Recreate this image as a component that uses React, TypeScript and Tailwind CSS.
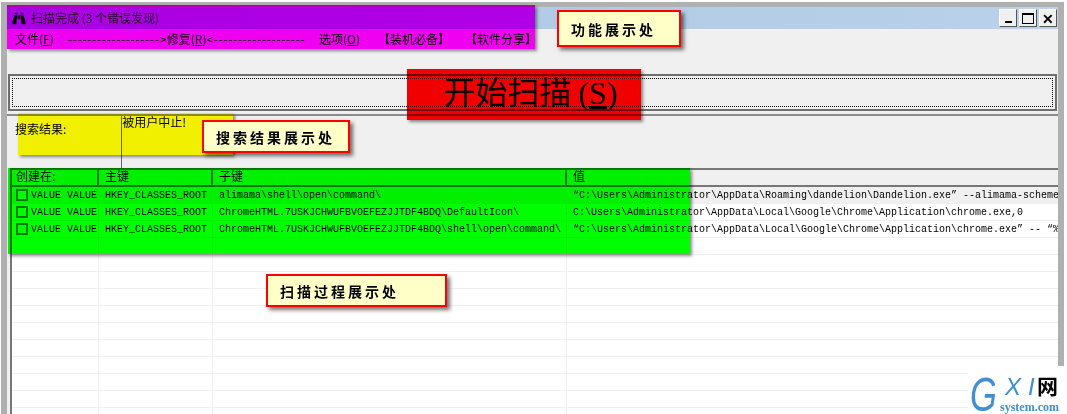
import React from "react";
import { FaBinoculars } from "react-icons/fa";

const cjk = "font-['Noto_Sans_CJK_SC','Liberation_Sans',sans-serif]";
const mono = "font-['Liberation_Mono','Noto_Sans_CJK_SC',monospace]";

const rows = [
  ["HKEY_CLASSES_ROOT", "alimama\\shell\\open\\command\\", "“C:\\Users\\Administrator\\AppData\\Roaming\\dandelion\\Dandelion.exe” --alimama-scheme"],
  ["HKEY_CLASSES_ROOT", "ChromeHTML.7USKJCHWUFBVOEFEZJJTDF4BDQ\\DefaultIcon\\", "C:\\Users\\Administrator\\AppData\\Local\\Google\\Chrome\\Application\\chrome.exe,0"],
  ["HKEY_CLASSES_ROOT", "ChromeHTML.7USKJCHWUFBVOEFEZJJTDF4BDQ\\shell\\open\\command\\", "“C:\\Users\\Administrator\\AppData\\Local\\Google\\Chrome\\Application\\chrome.exe” -- “%"],
];

function Note({ cls, children }: { cls: string; children: React.ReactNode }) {
  return (
    <div className={`absolute flex items-center border-[2px] border-[#ff0000] bg-[#ffffc8] pl-[12px] text-[14px] font-bold tracking-[3px] text-black shadow-[3px_3px_4px_rgba(0,0,0,0.55)] ${cls}`}>
      {children}
    </div>
  );
}

function WinBtn({ children }: { children: React.ReactNode }) {
  return (
    <div className="flex h-[18px] w-[18px] items-center justify-center border border-t-white border-l-white border-r-[#555] border-b-[#555] bg-[#f0f0f0]">
      {children}
    </div>
  );
}

export default function App() {
  return (
    <div className={`relative h-[414px] w-[1067px] overflow-hidden bg-white pt-[2px] text-[12px] leading-none text-black ${cjk}`}>
      <div className="ml-[1px] mr-[3px] flex h-[412px] flex-col border-x-[6px] border-t-[5px] border-[#b0b0b0] bg-[#f0f0f0]">
        {/* title bar */}
        <div className="flex h-[22px] shrink-0 items-center bg-gradient-to-r from-[#a9c6e2] to-[#b9d1ea] pl-[5px] pr-[1px]">
          <FaBinoculars className="h-[13px] w-[14px]" />
          <span className="ml-[5px] text-[12px] text-[#222]">扫描完成 (3 个错误发现)</span>
          <div className="ml-auto flex gap-[2px]">
            <WinBtn><div className="mt-[8px] h-[2px] w-[7px] bg-black" /></WinBtn>
            <WinBtn><div className="h-[11px] w-[12px] border border-t-[2px] border-black" /></WinBtn>
            <WinBtn><span className="text-[14px] font-bold leading-none">✕</span></WinBtn>
          </div>
        </div>
        {/* menu */}
        <div className="flex h-[20px] shrink-0 items-center whitespace-pre pl-[8px] text-[12px]">
          <span className="w-[53px] shrink-0">文件(<u>F</u>)</span>
          <span className="w-[251px] shrink-0">
            <span className="tracking-[0.65px]">{"------------------->"}</span>修复(<u>R</u>)<span className="tracking-[0.65px]">{"<-------------------"}</span>
          </span>
          <span className="w-[59px] shrink-0">选项(<u>O</u>)</span>
          <span className="w-[87px] shrink-0">【装机必备】</span>
          <span className="shrink-0">【软件分享】</span>
        </div>
        {/* scan button */}
        <div className="mt-[25px] mr-[1px] ml-[1px] h-[37px] shrink-0 border-2 border-[#6e6e6e] p-[2px]">
          <div className="flex h-full items-center justify-center border border-dotted border-black font-['Liberation_Serif','Noto_Sans_CJK_SC',serif] text-[32px]">
            <span className="mr-[4px]">开始扫描<span className="ml-[7px]">(<u>S</u>)</span></span>
          </div>
        </div>
        {/* search result */}
        <div className="mt-[3px] flex h-[54px] shrink-0 border-t-2 border-[#8c8c8c]">
          <span className="ml-[8px] mt-[7px] text-[12px]">搜索结果:</span>
          <div className="ml-[55px] w-[200px] border-l border-[#666] text-[12px]">被用户中止!</div>
        </div>
        {/* table */}
        <div className="ml-[3px] flex min-h-0 flex-1 flex-col overflow-hidden border-l-2 border-t-2 border-[#777] bg-white">
          <div className="flex h-[17px] shrink-0 items-center border-b-2 border-[#777] bg-[#f0f0f0] text-[12px]">
            <div className="h-full w-[87px] border-r-2 border-[#777] pl-[4px]">创建在:</div>
            <div className="h-full w-[114px] border-r-2 border-[#777] pl-[6px]">主键</div>
            <div className="h-full w-[354px] border-r-2 border-[#777] pl-[6px]">子键</div>
            <div className="h-full flex-1 pl-[6px]">值</div>
          </div>
          {Array.from({ length: 14 }).map((_, i) => {
            const r = rows[i];
            return (
              <div key={i} className={`flex h-[17px] shrink-0 items-center overflow-hidden whitespace-pre border-b border-[#f0f0f0] text-[10px] ${mono} ${i === 0 ? "bg-[#f0f0f0]" : ""}`}>
                <div className="flex h-full w-[87px] shrink-0 items-center border-r border-[#f0f0f0] pl-[4px]">
                  {r && <div className="h-[12px] w-[12px] shrink-0 border-2 border-[#7a7a7a] bg-white" />}
                  {r && <span className="ml-[3px] pt-[2px]">VALUE VALUE</span>}
                </div>
                <div className="flex h-full w-[114px] shrink-0 items-center border-r border-[#f0f0f0] pl-[6px] pt-[2px]">{r?.[0]}</div>
                <div className="flex h-full w-[354px] shrink-0 items-center border-r border-[#f0f0f0] pl-[6px] pt-[2px]">{r?.[1]}</div>
                <div className="flex h-full min-w-0 flex-1 items-center overflow-hidden pl-[6px] pt-[2px]">{r?.[2]}</div>
              </div>
            );
          })}
        </div>
      </div>

      {/* highlight overlays */}
      <div className="absolute left-[7px] top-[5px] h-[44px] w-[528px] bg-[#ff00ff] mix-blend-multiply shadow-[2px_2px_3px_rgba(0,0,0,0.45)]" />
      <div className="absolute left-[407px] top-[69px] h-[51px] w-[234px] bg-[#ff0000] mix-blend-multiply shadow-[2px_2px_3px_rgba(0,0,0,0.45)]" />
      <div className="absolute left-[18px] top-[113px] h-[42px] w-[215px] bg-[#ffff00] mix-blend-multiply shadow-[2px_2px_3px_rgba(0,0,0,0.45)]" />
      <div className="absolute left-[8px] top-[168px] h-[86px] w-[682px] bg-[#00ff00] mix-blend-multiply shadow-[2px_2px_3px_rgba(0,0,0,0.45)]" />

      {/* notes */}
      <Note cls="left-[557px] top-[10px] h-[37px] w-[124px]">功能展示处</Note>
      <Note cls="left-[202px] top-[120px] h-[33px] w-[148px]">搜索结果展示处</Note>
      <Note cls="left-[266px] top-[274px] h-[33px] w-[181px]">扫描过程展示处</Note>

      {/* watermark */}
      <div className="absolute bottom-0 right-0 h-[48px] w-[99px] bg-white">
        <span className="absolute left-[2px] top-[12px] origin-left scale-x-[0.72] font-['Liberation_Sans',sans-serif] text-[48px] leading-[34px] text-[#3f8fd2] italic">G</span>
        <span className="absolute left-[37px] top-[9px] font-['Liberation_Sans',sans-serif] text-[24px] leading-none tracking-[7px] text-[#3f8fd2] italic">XI</span>
        <span className="absolute left-[69px] top-[9px] text-[21px] leading-none font-bold">网</span>
        <span className="absolute left-[32px] top-[35px] font-['Liberation_Serif',serif] text-[12px] font-bold leading-none text-[#3f8fd2]">system.com</span>
      </div>
    </div>
  );
}
